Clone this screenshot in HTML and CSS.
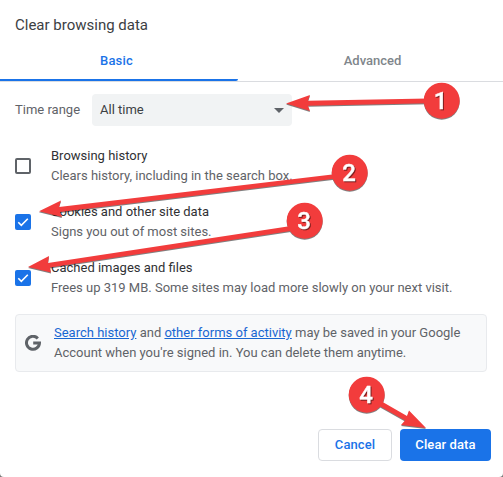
FILE: index.html
```html
<!DOCTYPE html>
<html lang="en">
<head>
<meta charset="utf-8">
<title>Clear browsing data</title>
<link rel="stylesheet" href="styles.css">
</head>
<body>
<main class="dialog">
  <h1 class="title">Clear browsing data</h1>
  <nav class="tabs">
    <div class="tab tab-active"><span>Basic</span></div>
    <div class="tab"><span>Advanced</span></div>
  </nav>
  <div class="range">
    <span class="range-label">Time range</span>
    <div class="select"><span>All time</span><svg width="10" height="5" viewBox="0 0 10 5"><path d="M0 0h10L5 5z" fill="#5f6368"/></svg></div>
  </div>
  <div class="options">
    <div class="option">
      <span class="check"></span>
      <div><div class="name">Browsing history</div><div class="desc">Clears history, including in the search box.</div></div>
    </div>
    <div class="option">
      <span class="check checked"><svg width="16" height="16" viewBox="0 0 16 16"><path d="M3.3 8.3l3 3L12.8 4.7" fill="none" stroke="#fff" stroke-width="1.6"/></svg></span>
      <div><div class="name">Cookies and other site data</div><div class="desc">Signs you out of most sites.</div></div>
    </div>
    <div class="option">
      <span class="check checked"><svg width="16" height="16" viewBox="0 0 16 16"><path d="M3.3 8.3l3 3L12.8 4.7" fill="none" stroke="#fff" stroke-width="1.6"/></svg></span>
      <div><div class="name">Cached images and files</div><div class="desc">Frees up 319 MB. Some sites may load more slowly on your next visit.</div></div>
    </div>
  </div>
  <div class="notice">
    <svg class="google" width="16" height="16" viewBox="0 0 16 16"><path d="M12.8 3.4A6.5 6.5 0 1 0 14.5 8H8.2" fill="none" stroke="#5f6368" stroke-width="3"/></svg>
    <div><a>Search history</a> and <a>other forms of activity</a> may be saved in your Google<br>Account when you're signed in. You can delete them anytime.</div>
  </div>
  <div class="actions">
    <button class="btn cancel">Cancel</button>
    <button class="btn clear">Clear data</button>
  </div>
</main>
<svg class="marks" width="503" height="477" viewBox="0 0 503 477">
  <g class="mark">
    <path d="M441.5 98.2L308 100.7 310 95 286 103.5 310 111 308 105.8 441.5 103z"/>
    <circle cx="441.7" cy="100.7" r="18"/>
    <path d="M349 172.5L59 207 61 200.5 39 211.3 62 217 60 212 349 177z"/>
    <circle cx="349.7" cy="172.7" r="18"/>
    <path d="M304 224L48 263 49 256 28 267 51 272.5 50 267.5 304 229z"/>
    <circle cx="304.7" cy="220.7" r="18"/>
    <path d="M367 393L407 416 409 410.5 426 428 401 425 405 420.5 365 398z"/>
    <circle cx="366.7" cy="394.7" r="18"/>
  </g>
  <g class="digits">
    <text x="440.5" y="109">1</text>
    <text x="349" y="181">2</text>
    <text x="304" y="229">3</text>
    <text x="366" y="403">4</text>
  </g>
</svg>
</body>
</html>
```
FILE: styles.css
```css
* { box-sizing: border-box; }
body {
  margin: 0;
  background: #777;
  font: 13px/20px Roboto, "Liberation Sans", sans-serif;
  color: #5f6368;
}
.dialog {
  width: 503px;
  height: 477px;
  background: #fff;
  border-radius: 0 0 4px 4px;
  display: flex;
  flex-direction: column;
}
.title {
  margin: 0;
  padding: 15px 15px 0;
  height: 41px;
  font-size: 15px;
  font-weight: 400;
  color: #3c4043;
}
.tabs {
  display: flex;
  height: 41px;
  border-bottom: 1px solid #dadce0;
}
.tab {
  flex: 1;
  padding: 10px 0 0 4px;
  text-align: center;
  font-weight: 500;
  color: #80868b;
}
.tab-active {
  flex: 0 0 238px;
  height: 40px;
  padding: 10px 5px 0 0;
  border-bottom: 2px solid #1a73e8;
  border-radius: 0 0 2px 0;
  letter-spacing: 0.15px;
  color: #1a73e8;
}
.range {
  display: flex;
  align-items: center;
  height: 32px;
  margin: 12px 15px 20px;
}
.range-label { width: 77px; }
.select {
  display: flex;
  align-items: center;
  justify-content: space-between;
  width: 200px;
  height: 32px;
  padding: 0 8px;
  border-radius: 4px;
  background: #f1f3f4;
  color: #3c4043;
}
.options {
  display: flex;
  flex-direction: column;
  gap: 16px;
  padding: 0 15px;
}
.option {
  display: flex;
  align-items: center;
  gap: 20px;
  height: 40px;
}
.name { color: #303134; }
.check {
  display: flex;
  width: 16px;
  height: 16px;
  border: 2px solid #5f6368;
  border-radius: 2px;
}
.checked {
  border: 0;
  background: #1a73e8;
}
.notice {
  display: flex;
  align-items: center;
  gap: 13px;
  width: 472px;
  height: 58px;
  margin: 16px 15px 0;
  padding: 0 9px;
  border: 1px solid #e8eaed;
  border-radius: 4px;
  background: #f8f9fa;
}
.notice a {
  color: #1967d2;
  text-decoration: underline;
}
.actions {
  display: flex;
  justify-content: flex-end;
  gap: 8px;
  margin-top: 57px;
  padding-right: 12px;
}
.btn {
  height: 32px;
  padding: 0;
  border-radius: 4px;
  font: inherit;
  font-weight: 500;
  letter-spacing: 0.1px;
}
.cancel {
  width: 74px;
  border: 1px solid #dadce0;
  background: #fff;
  color: #1a73e8;
}
.clear {
  width: 91px;
  border: 0;
  background: #1a73e8;
  color: #fff;
}
.marks {
  position: absolute;
  left: 0;
  top: 0;
}
.mark {
  fill: #f23c3c;
  filter: drop-shadow(0 1px 0.5px rgba(0, 0, 0, 0.5));
}
.digits {
  fill: #fff;
  stroke: #fff;
  stroke-width: 0.4px;
  font: 500 24px Roboto, sans-serif;
  text-anchor: middle;
  filter: drop-shadow(1px 1px 0.5px rgba(0, 0, 0, 0.5));
}
```
